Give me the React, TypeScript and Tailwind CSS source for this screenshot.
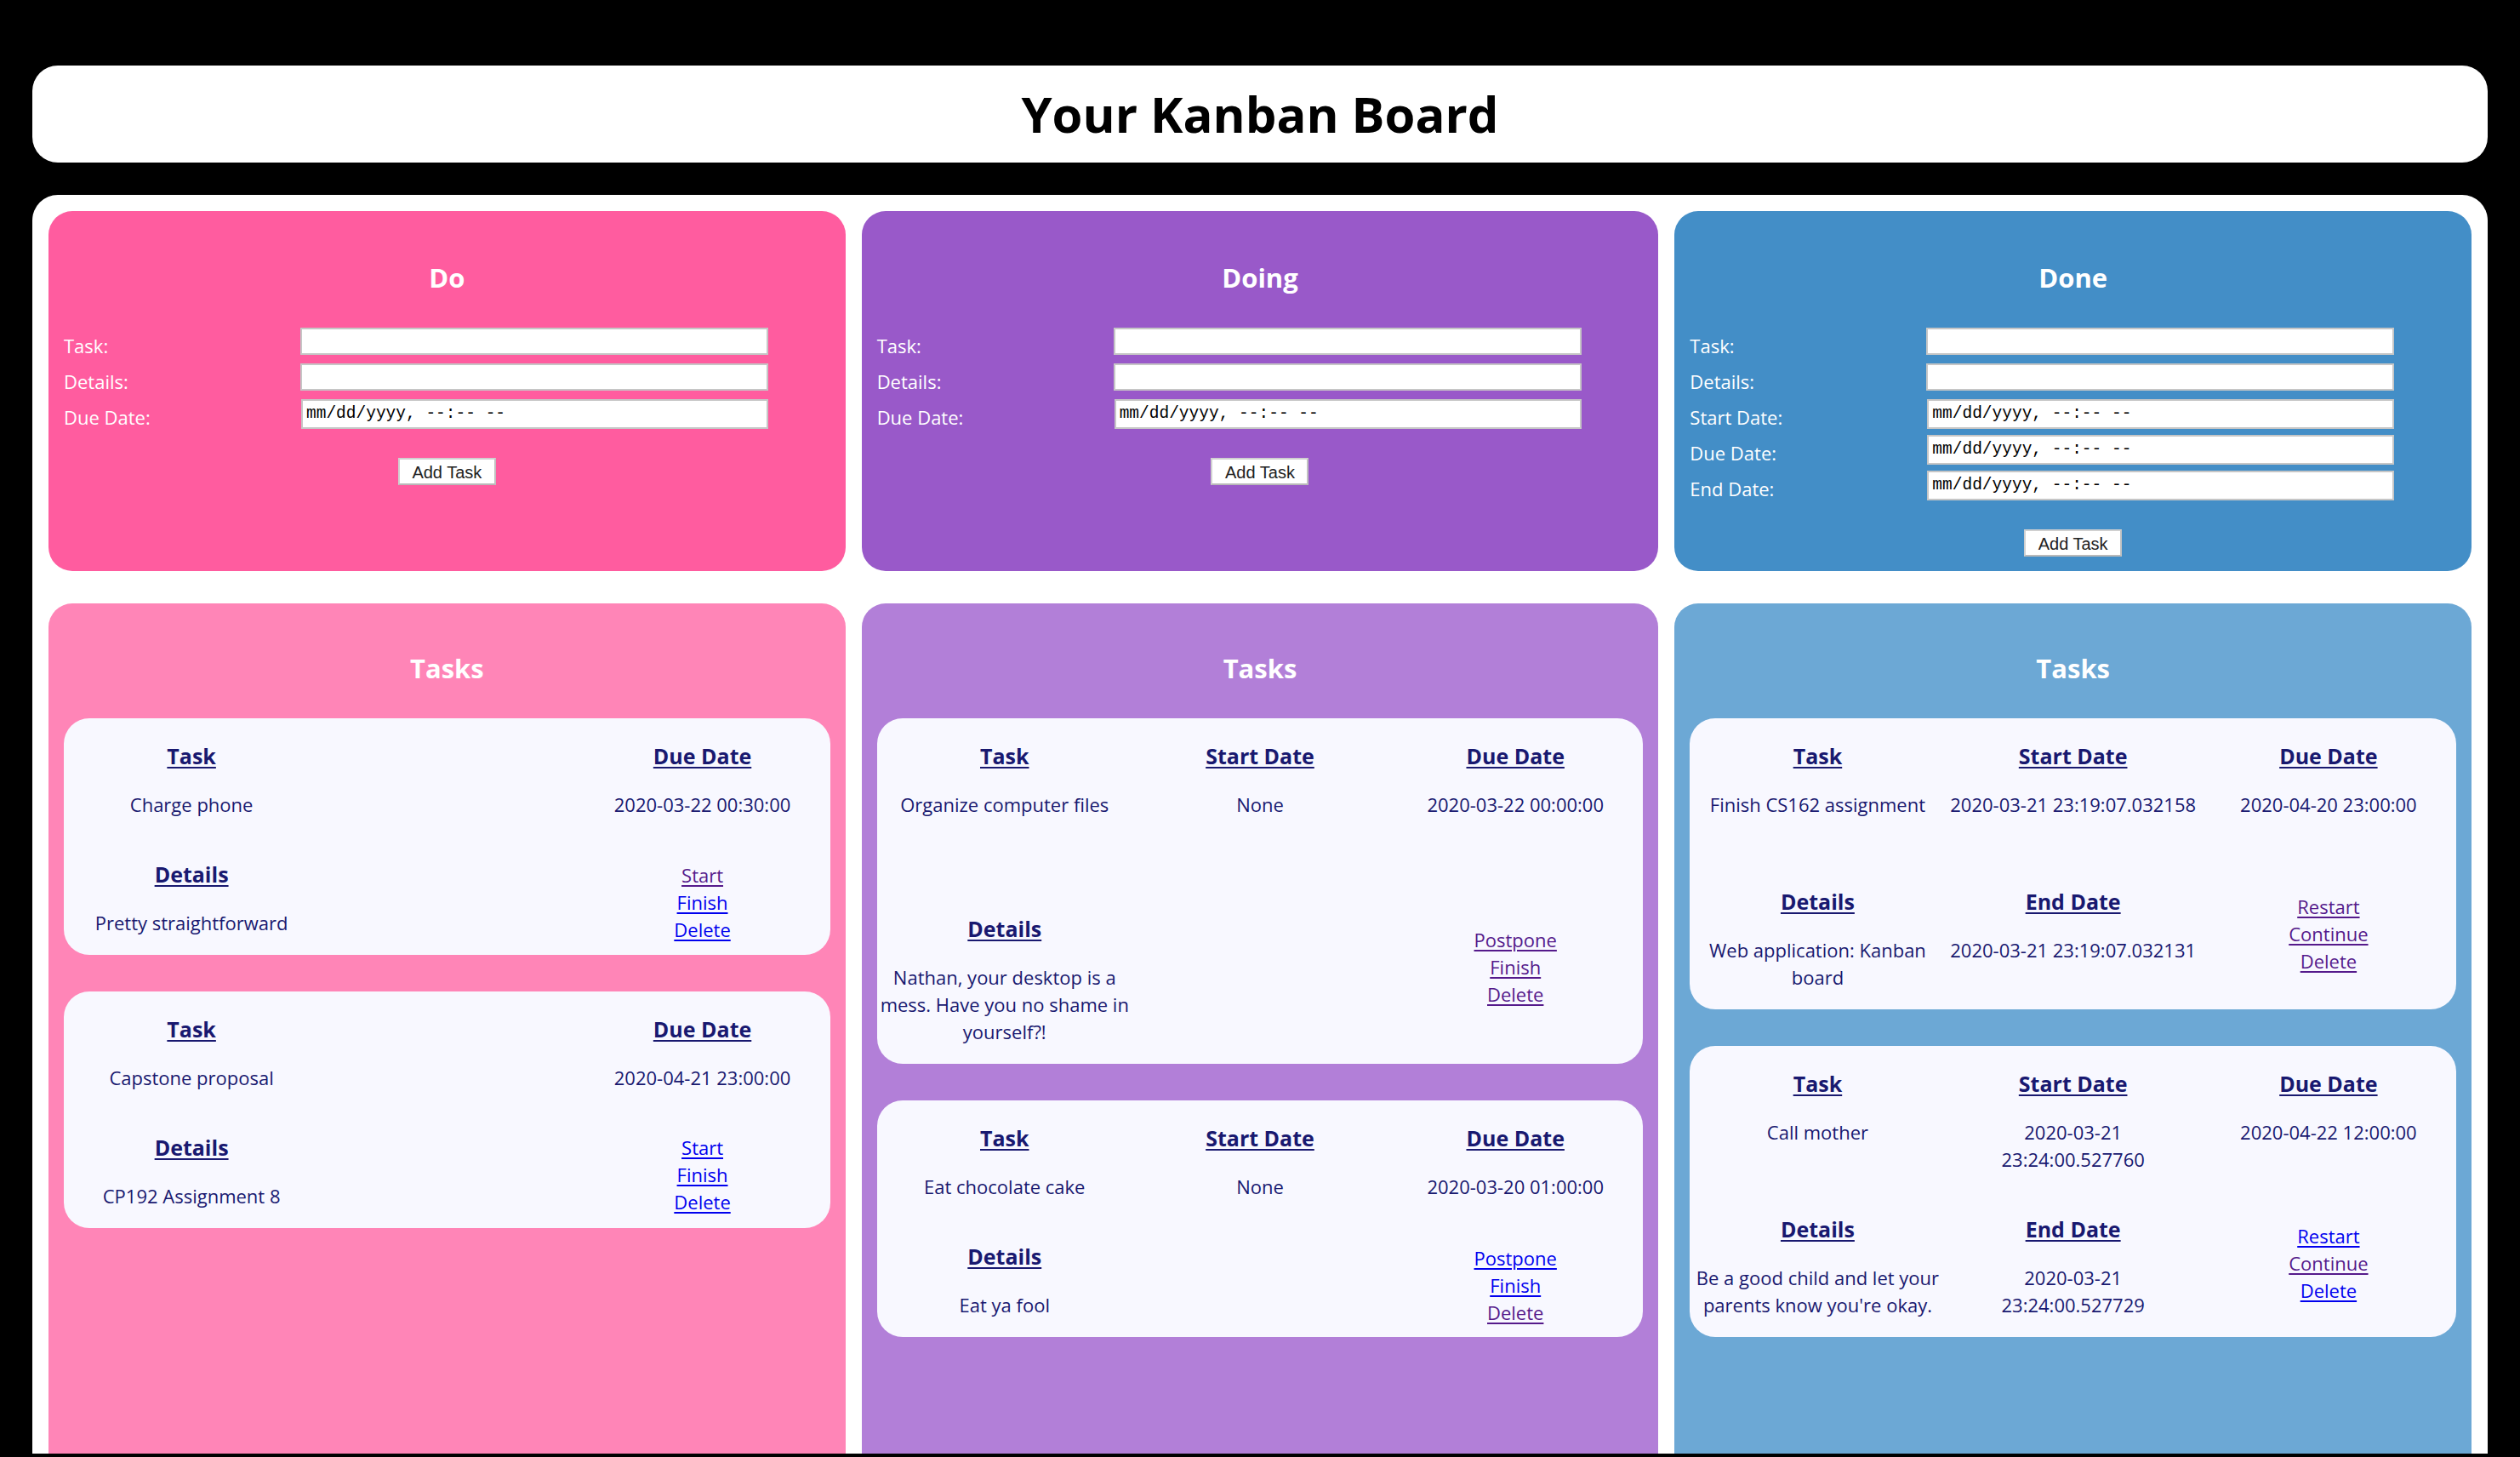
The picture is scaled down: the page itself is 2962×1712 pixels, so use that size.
import React from "react";

type LinkItem = { label: string; visited: boolean };
type Cell = { title: string; value: string } | null;
type CardData = {
  row1: [Cell, Cell, Cell];
  row2: [Cell, Cell];
  links: LinkItem[];
  linkOffset: string;
};
type ColumnData = {
  name: string;
  formBg: string;
  tasksBg: string;
  fields: { label: string; date: boolean }[];
  cards: CardData[];
};

const columns: ColumnData[] = [
  {
    name: "Do",
    formBg: "bg-[#FF5C9F]",
    tasksBg: "bg-[#FF85B7]",
    fields: [
      { label: "Task:", date: false },
      { label: "Details:", date: false },
      { label: "Due Date:", date: true },
    ],
    cards: [
      {
        row1: [{ title: "Task", value: "Charge phone" }, null, { title: "Due Date", value: "2020-03-22 00:30:00" }],
        row2: [{ title: "Details", value: "Pretty straightforward" }, null],
        links: [
          { label: "Start", visited: true },
          { label: "Finish", visited: false },
          { label: "Delete", visited: false },
        ],
        linkOffset: "mt-[29px]",
      },
      {
        row1: [{ title: "Task", value: "Capstone proposal" }, null, { title: "Due Date", value: "2020-04-21 23:00:00" }],
        row2: [{ title: "Details", value: "CP192 Assignment 8" }, null],
        links: [
          { label: "Start", visited: false },
          { label: "Finish", visited: false },
          { label: "Delete", visited: false },
        ],
        linkOffset: "mt-[28px]",
      },
    ],
  },
  {
    name: "Doing",
    formBg: "bg-[#9959C9]",
    tasksBg: "bg-[#B27FD8]",
    fields: [
      { label: "Task:", date: false },
      { label: "Details:", date: false },
      { label: "Due Date:", date: true },
    ],
    cards: [
      {
        row1: [
          { title: "Task", value: "Organize computer files" },
          { title: "Start Date", value: "None" },
          { title: "Due Date", value: "2020-03-22 00:00:00" },
        ],
        row2: [{ title: "Details", value: "Nathan, your desktop is a\nmess. Have you no shame in\nyourself?!" }, null],
        links: [
          { label: "Postpone", visited: true },
          { label: "Finish", visited: true },
          { label: "Delete", visited: true },
        ],
        linkOffset: "mt-[41px]",
      },
      {
        row1: [
          { title: "Task", value: "Eat chocolate cake" },
          { title: "Start Date", value: "None" },
          { title: "Due Date", value: "2020-03-20 01:00:00" },
        ],
        row2: [{ title: "Details", value: "Eat ya fool" }, null],
        links: [
          { label: "Postpone", visited: false },
          { label: "Finish", visited: false },
          { label: "Delete", visited: true },
        ],
        linkOffset: "mt-[30px]",
      },
    ],
  },
  {
    name: "Done",
    formBg: "bg-[#438EC7]",
    tasksBg: "bg-[#6CA8D5]",
    fields: [
      { label: "Task:", date: false },
      { label: "Details:", date: false },
      { label: "Start Date:", date: true },
      { label: "Due Date:", date: true },
      { label: "End Date:", date: true },
    ],
    cards: [
      {
        row1: [
          { title: "Task", value: "Finish CS162 assignment" },
          { title: "Start Date", value: "2020-03-21 23:19:07.032158" },
          { title: "Due Date", value: "2020-04-20 23:00:00" },
        ],
        row2: [
          { title: "Details", value: "Web application: Kanban\nboard" },
          { title: "End Date", value: "2020-03-21 23:19:07.032131" },
        ],
        links: [
          { label: "Restart", visited: true },
          { label: "Continue", visited: true },
          { label: "Delete", visited: true },
        ],
        linkOffset: "mt-[34px]",
      },
      {
        row1: [
          { title: "Task", value: "Call mother" },
          { title: "Start Date", value: "2020-03-21\n23:24:00.527760" },
          { title: "Due Date", value: "2020-04-22 12:00:00" },
        ],
        row2: [
          { title: "Details", value: "Be a good child and let your\nparents know you're okay." },
          { title: "End Date", value: "2020-03-21\n23:24:00.527729" },
        ],
        links: [
          { label: "Restart", visited: false },
          { label: "Continue", visited: true },
          { label: "Delete", visited: false },
        ],
        linkOffset: "mt-[36px]",
      },
    ],
  },
];

function InfoCell({ cell }: { cell: Cell }) {
  if (!cell) return <div />;
  return (
    <div className="flex flex-col items-center text-center pt-[25px] pb-[22px]">
      <div className="text-[25px] font-bold leading-[39px] underline decoration-2 underline-offset-[3px]">
        {cell.title}
      </div>
      <div className="mt-[21px] text-[22px] leading-[32px] whitespace-pre-line">{cell.value}</div>
    </div>
  );
}

function TaskCard({ card }: { card: CardData }) {
  return (
    <div className="bg-[#F8F8FF] rounded-[30px] text-[#191970] grid grid-cols-3 auto-rows-fr">
      {card.row1.map((c, i) => (
        <InfoCell key={i} cell={c} />
      ))}
      <InfoCell cell={card.row2[0]} />
      <InfoCell cell={card.row2[1]} />
      <div className={`flex flex-col items-center self-start ${card.linkOffset}`}>
        {card.links.map((l) => (
          <a
            key={l.label}
            href="#"
            className={`text-[22px] leading-[32px] underline decoration-[1.5px] underline-offset-[3px] ${
              l.visited ? "text-[#551A8B]" : "text-[#0000EE]"
            }`}
          >
            {l.label}
          </a>
        ))}
      </div>
    </div>
  );
}

function FormPanel({ col }: { col: ColumnData }) {
  return (
    <div className={`${col.formBg} rounded-[28px] px-[18px] pt-[52px] pb-[17px] flex flex-col`}>
      <h3 className="text-[31px] font-bold leading-[52px] text-white text-center mb-[33px]">{col.name}</h3>
      <div className="flex flex-col">
        {col.fields.map((f) => (
          <div key={f.label} className="h-[42px] flex items-start">
            <label className="w-[278px] text-[22px] leading-[32px] text-white mt-[5px]">{f.label}</label>
            {f.date ? (
              <div className="ml-[1px] w-[549px] h-[35px] bg-white border-2 border-[#c6c6c6] flex items-center pl-[4px] font-['Liberation_Mono',monospace] text-[19.5px] text-black">
                mm/dd/yyyy, --:-- --
              </div>
            ) : (
              <input
                type="text"
                className="w-[550px] h-[32px] bg-white border-2 border-[#c6c6c6] outline-none"
              />
            )}
          </div>
        ))}
      </div>
      <button
        type="button"
        className="mt-[27px] self-center w-[115px] h-[32px] bg-white border-2 border-[#d0d0d0] border-b-[#b9b9b9] border-r-[#c2c2c2] font-['Liberation_Sans',Arial,sans-serif] text-[20px] text-[#222]"
      >
        Add Task
      </button>
    </div>
  );
}

function TasksPanel({ col }: { col: ColumnData }) {
  return (
    <div className={`${col.tasksBg} rounded-t-[28px] px-[18px] pt-[50px] flex flex-col`}>
      <h3 className="text-[31px] font-bold leading-[52px] text-white text-center mb-[33px]">Tasks</h3>
      <div className="flex flex-col gap-[43px]">
        {col.cards.map((c, i) => (
          <TaskCard key={i} card={c} />
        ))}
      </div>
    </div>
  );
}

export default function App() {
  return (
    <div className="h-[1712px] bg-black overflow-hidden flex flex-col pt-[77px] px-[38px] pb-[4px] font-['Comic_Sans_MS','Open_Sans',sans-serif]">
      <header className="h-[114px] shrink-0 bg-white rounded-[30px] flex items-center justify-center">
        <h1 className="text-[58px] font-bold text-black leading-none">Your Kanban Board</h1>
      </header>
      <main className="mt-[38px] flex-1 min-h-0 bg-white rounded-t-[30px] px-[19px] pt-[19px] overflow-hidden">
        <div className="grid grid-cols-3 grid-rows-[auto_1fr] gap-x-[19px] gap-y-[38px] h-full">
          {columns.map((c) => (
            <FormPanel key={`f-${c.name}`} col={c} />
          ))}
          {columns.map((c) => (
            <TasksPanel key={`t-${c.name}`} col={c} />
          ))}
        </div>
      </main>
    </div>
  );
}
